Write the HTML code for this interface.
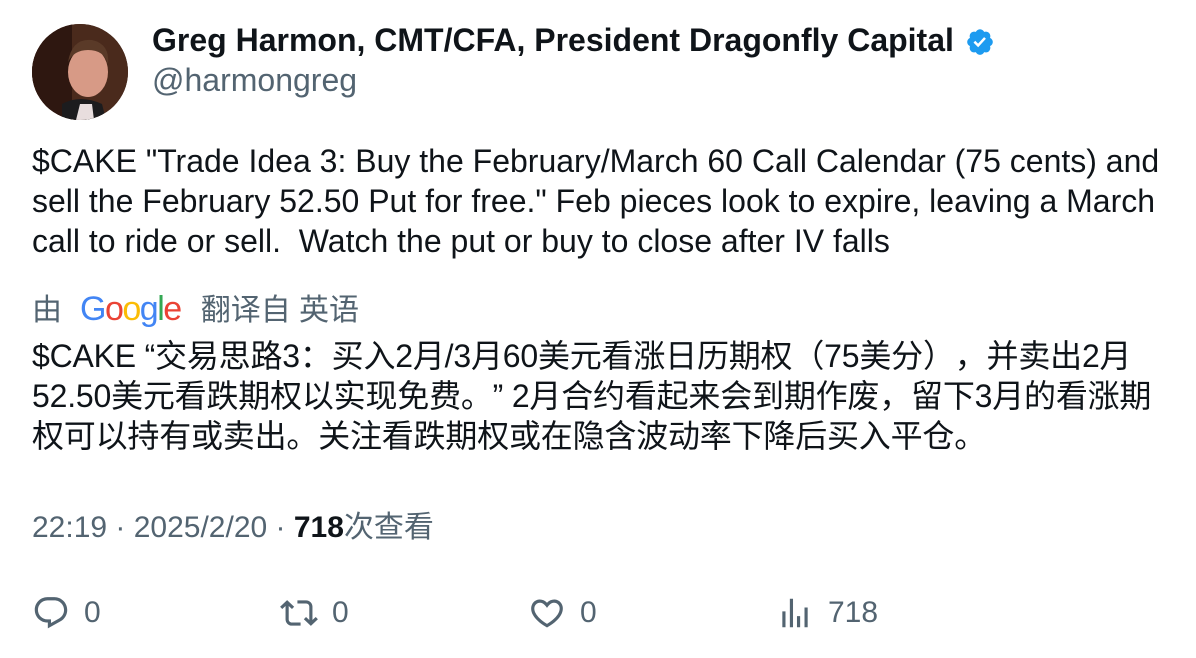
<!DOCTYPE html>
<html><head><meta charset="utf-8"><style>
*{margin:0;padding:0;box-sizing:border-box}
body{width:1196px;height:658px;background:#fff;font-family:"Liberation Sans","Noto Sans CJK SC",sans-serif;color:#0f1419;position:relative;overflow:hidden}
.av{position:absolute;left:32px;top:24px;width:96px;height:96px;border-radius:50%;overflow:hidden;background:#3a1f16}
.name{position:absolute;left:152px;top:22px;font-size:32px;font-weight:bold;white-space:nowrap}
.handle{position:absolute;left:152px;top:62px;font-size:32px;color:#536471}
.txt{position:absolute;left:32px;top:141px;width:1150px;font-size:32px;line-height:40px}
.tr{position:absolute;left:32px;top:285px;font-size:30px;color:#536471;white-space:nowrap}
.g{font-family:"Liberation Sans",sans-serif;font-size:34px;letter-spacing:-1.5px;margin:0 20px 0 18px}
.zh{position:absolute;left:32px;top:336px;width:1140px;font-size:32px;line-height:40px;text-spacing-trim:space-all;letter-spacing:-0.2px}
.meta{position:absolute;left:32px;top:502px;font-size:30px;color:#536471;white-space:nowrap}
.meta b{color:#0f1419}
.act{position:absolute;top:594px;font-size:30px;color:#536471;display:flex;align-items:center}
.act svg{width:38px;height:38px;margin-right:14px;fill:#536471}
</style></head><body>
<div class="av"><svg width="96" height="96" viewBox="0 0 96 96"><rect width="96" height="96" fill="#4a2a1c"/><rect x="0" y="0" width="40" height="96" fill="#2e1710"/><path d="M30 96 L30 80 Q48 70 70 80 L74 96Z" fill="#1c1c1e"/><path d="M44 96 L48 80 L60 80 L62 96Z" fill="#e8dede"/><ellipse cx="56" cy="48" rx="20" ry="25" fill="#d79a86"/><path d="M36 38 Q40 14 60 16 Q78 20 76 40 Q72 26 56 26 Q42 26 36 38Z" fill="#5a3a28"/></svg></div>
<div class="name">Greg Harmon, CMT/CFA, President Dragonfly Capital <svg style="vertical-align:-6px;margin-left:2px" width="30" height="30" viewBox="0 0 24 24"><path fill="#1d9bf0" d="M22.25 12c0-1.43-.88-2.670-2.19-3.34.46-1.39.2-2.9-.81-3.91s-2.520-1.27-3.91-.81c-.66-1.31-1.91-2.19-3.34-2.19s-2.67.88-3.33 2.19c-1.4-.46-2.91-.2-3.920.81s-1.26 2.52-.8 3.91c-1.31.67-2.2 1.91-2.2 3.34s.89 2.67 2.2 3.34c-.46 1.39-.21 2.9.8 3.91s2.52 1.26 3.91.81c.67 1.31 1.91 2.19 3.34 2.19s2.68-.88 3.34-2.19c1.39.45 2.9.2 3.91-.81s1.27-2.52.81-3.91c1.31-.67 2.19-1.91 2.19-3.34z"/><path fill="#fff" d="M10.54 16.2l-3.74-3.74 1.41-1.42 2.26 2.26 4.8-5.23 1.47 1.36z"/></svg></div>
<div class="handle">@harmongreg</div>
<div class="txt">$CAKE "Trade Idea 3: Buy the February/March 60 Call Calendar (75 cents) and sell the February 52.50 Put for free." Feb pieces look to expire, leaving a March call to ride or sell.&nbsp; Watch the put or buy to close after IV falls</div>
<div class="tr">由<span class="g"><span style="color:#4285f4">G</span><span style="color:#ea4335">o</span><span style="color:#fbbc05">o</span><span style="color:#4285f4">g</span><span style="color:#34a853">l</span><span style="color:#ea4335">e</span></span>翻译自 英语</div>
<div class="zh">$CAKE “交易思路3：买入2月/3月60美元看涨日历期权（75美分），并卖出2月52.50美元看跌期权以实现免费。” 2月合约看起来会到期作废，留下3月的看涨期权可以持有或卖出。关注看跌期权或在隐含波动率下降后买入平仓。</div>
<div class="meta">22:19 · 2025/2/20 · <b>718</b>次查看</div>
<div class="act" style="left:32px"><svg viewBox="0 0 24 24"><path d="M1.751 10c0-4.42 3.584-8 8.005-8h4.366c4.49 0 8.129 3.64 8.129 8.13 0 2.960-1.607 5.68-4.196 7.11l-8.054 4.46v-3.69h-.067c-4.490.1-8.183-3.510-8.183-8.010zm8.005-6c-3.317 0-6.005 2.69-6.005 6 0 3.37 2.77 6.08 6.138 6.010l.351-.01h1.761v2.3l5.087-2.81c1.951-1.08 3.163-3.13 3.163-5.36 0-3.39-2.744-6.13-6.129-6.13H9.756z"/></svg>0</div>
<div class="act" style="left:280px"><svg viewBox="0 0 24 24"><path d="M4.5 3.88l4.432 4.14-1.364 1.46L5.5 7.55V16c0 1.1.896 2 2 2H13v2H7.5c-2.209 0-4-1.79-4-4V7.55L1.432 9.48.068 8.02 4.5 3.88zM16.5 6H11V4h5.5c2.209 0 4 1.79 4 4v8.45l2.068-1.93 1.364 1.46-4.432 4.14-4.432-4.14 1.364-1.46 2.068 1.93V8c0-1.1-.896-2-2-2z"/></svg>0</div>
<div class="act" style="left:528px"><svg viewBox="0 0 24 24"><path d="M16.697 5.5c-1.222-.06-2.679.51-3.890 2.160l-.805 1.090-.806-1.090C9.984 6.010 8.526 5.440 7.304 5.5c-1.243.07-2.349.78-2.910 1.910-.552 1.120-.633 2.780.479 4.820 1.074 1.970 3.257 4.270 7.129 6.610 3.870-2.340 6.052-4.640 7.126-6.610 1.111-2.040 1.030-3.700.477-4.820-.561-1.130-1.666-1.840-2.908-1.910zm4.187 7.690c-1.351 2.480-4.001 5.120-8.379 7.670l-.503.3-.504-.3c-4.379-2.550-7.029-5.190-8.382-7.670-1.360-2.500-1.410-4.860-.514-6.670.887-1.790 2.647-2.910 4.601-3.010 1.651-.090 3.368.560 4.798 2.010 1.429-1.450 3.146-2.100 4.796-2.010 1.954.1 3.714 1.220 4.601 3.010.896 1.810.846 4.170-.514 6.670z"/></svg>0</div>
<div class="act" style="left:776px"><svg viewBox="0 0 24 24"><path d="M8.75 21V3h2v18h-2zM18 21V8.5h2V21h-2zM4 21l.004-10h2L6 21H4zm9.248 0v-7h2v7h-2z"/></svg>718</div>
</body></html>
